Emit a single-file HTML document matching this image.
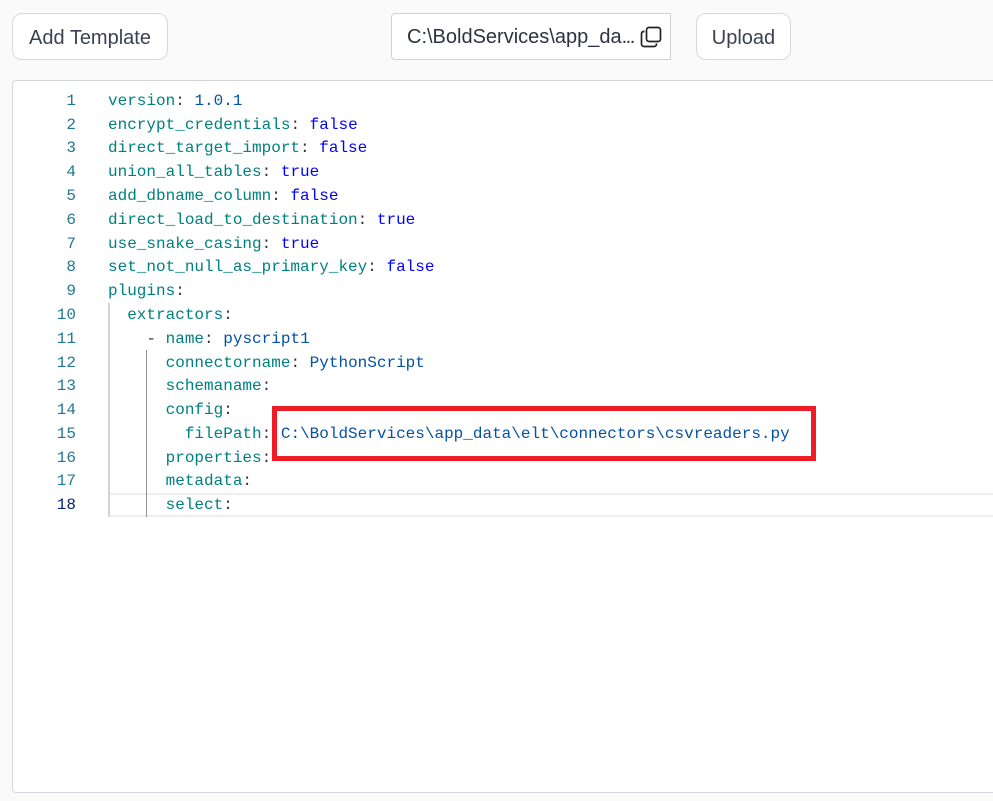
<!DOCTYPE html>
<html>
<head>
<meta charset="utf-8">
<style>
html,body{margin:0;padding:0;width:993px;height:801px;overflow:hidden;background:#fafafb;}
body{position:relative;font-family:"Liberation Sans",sans-serif;}
.btn{position:absolute;top:13px;height:45px;box-sizing:content-box;background:#fff;border:1px solid #d5d8e0;border-radius:10px;color:#3a4252;font-size:20px;line-height:49px;white-space:nowrap;}
#editor{position:absolute;left:12px;top:80px;width:990px;height:711px;background:#fff;border:1px solid #d3d6df;border-radius:4px;overflow:hidden;}
.ln,.c{position:absolute;font-family:"Liberation Mono",monospace;font-size:16px;line-height:24px;white-space:pre;}
.ln{left:0;width:63px;text-align:right;color:#237893;}
.c{left:95px;color:#008080;}
.p{color:#333;}.n{color:#0451a5;}.b{color:#0000ff;}.s{color:#0451a5;}
</style>
</head>
<body>
<div class="btn" style="left:12px;width:154px;text-align:center;">Add Template</div>
<div style="position:absolute;left:391px;top:13px;width:278px;height:45px;background:#fff;border:1px solid #ced2dc;border-radius:4px 0 0 4px;"></div>
<div style="position:absolute;left:407px;top:13px;height:47px;line-height:49px;font-size:20px;color:#2c3340;white-space:nowrap;">C:\BoldServices\app_da<span style="letter-spacing:-1.5px">...</span></div>
<svg style="position:absolute;left:640px;top:26px" width="22" height="22" viewBox="0 0 22 22" fill="none" stroke="#222" stroke-width="1.7"><rect x="6.5" y="1.5" width="14" height="14" rx="2.5"/><path d="M4.5 5.5 H3.5 A2.5 2.5 0 0 0 1.5 8 V18 A2.5 2.5 0 0 0 4 20.5 H14 A2.5 2.5 0 0 0 16.5 18 V17.5"/></svg>
<div class="btn" style="left:696px;width:93px;text-align:center;">Upload</div>
<div id="editor">
<div style="position:absolute;left:96px;top:412px;width:900px;height:20px;border-top:2px solid #eeeeee;border-bottom:2px solid #eeeeee;"></div>
<div style="position:absolute;left:95px;top:222px;width:2px;height:214px;background:#d3d3d3;"></div>
<div style="position:absolute;left:133px;top:269px;width:1px;height:167px;background:#939393;"></div>
<div class="ln" style="top:8px">1</div><div class="c" style="top:8px">version<span class="p">:</span> <span class="n">1.0.1</span></div>
<div class="ln" style="top:32px">2</div><div class="c" style="top:32px">encrypt_credentials<span class="p">:</span> <span class="b">false</span></div>
<div class="ln" style="top:55px">3</div><div class="c" style="top:55px">direct_target_import<span class="p">:</span> <span class="b">false</span></div>
<div class="ln" style="top:79px">4</div><div class="c" style="top:79px">union_all_tables<span class="p">:</span> <span class="b">true</span></div>
<div class="ln" style="top:103px">5</div><div class="c" style="top:103px">add_dbname_column<span class="p">:</span> <span class="b">false</span></div>
<div class="ln" style="top:127px">6</div><div class="c" style="top:127px">direct_load_to_destination<span class="p">:</span> <span class="b">true</span></div>
<div class="ln" style="top:151px">7</div><div class="c" style="top:151px">use_snake_casing<span class="p">:</span> <span class="b">true</span></div>
<div class="ln" style="top:174px">8</div><div class="c" style="top:174px">set_not_null_as_primary_key<span class="p">:</span> <span class="b">false</span></div>
<div class="ln" style="top:198px">9</div><div class="c" style="top:198px">plugins<span class="p">:</span></div>
<div class="ln" style="top:222px">10</div><div class="c" style="top:222px">  extractors<span class="p">:</span></div>
<div class="ln" style="top:246px">11</div><div class="c" style="top:246px">    <span class="p">-</span> name<span class="p">:</span> <span class="s">pyscript1</span></div>
<div class="ln" style="top:270px">12</div><div class="c" style="top:270px">      connectorname<span class="p">:</span> <span class="s">PythonScript</span></div>
<div class="ln" style="top:293px">13</div><div class="c" style="top:293px">      schemaname<span class="p">:</span></div>
<div class="ln" style="top:317px">14</div><div class="c" style="top:317px">      config<span class="p">:</span></div>
<div class="ln" style="top:341px">15</div><div class="c" style="top:341px">        filePath<span class="p">:</span> <span class="s">C:\BoldServices\app_data\elt\connectors\csvreaders.py</span></div>
<div class="ln" style="top:365px">16</div><div class="c" style="top:365px">      properties<span class="p">:</span></div>
<div class="ln" style="top:388px">17</div><div class="c" style="top:388px">      metadata<span class="p">:</span></div>
<div class="ln" style="top:412px;color:#0b216f;">18</div><div class="c" style="top:412px">      select<span class="p">:</span></div>
</div>
<div style="position:absolute;left:272px;top:406px;width:534px;height:45px;border:5px solid #ee1c25;"></div>
</body>
</html>
